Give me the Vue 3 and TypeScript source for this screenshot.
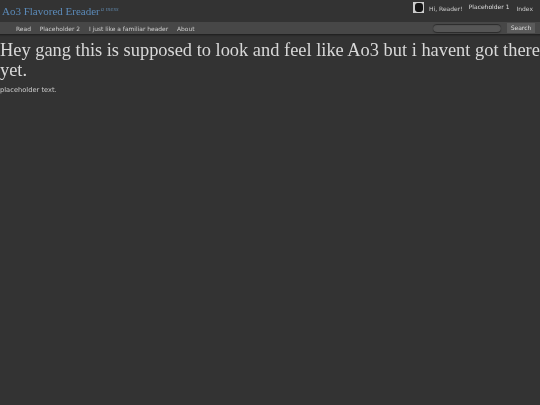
<script setup lang="ts">
const navLinks: string[] = ['Read', 'Placeholder 2', 'I just like a familiar header', 'About']
</script>

<template>
  <div class="page">
    <header class="header">
      <div class="top">
        <h1 class="brand">Ao3 Flavored Ereader<sup class="tag">a mess</sup></h1>
        <div class="user">
          <span class="avatar"><span class="blot"></span></span>
          <span class="greet">Hi, Reader!</span>
          <span class="ph">Placeholder 1</span>
          <span class="idx">Index</span>
        </div>
      </div>
      <nav class="nav">
        <div class="links">
          <a v-for="l in navLinks" :key="l" class="link">{{ l }}</a>
        </div>
        <div class="search">
          <span class="input"></span>
          <span class="btn">Search</span>
        </div>
      </nav>
    </header>
    <main>
      <h2 class="title">Hey gang this is supposed to look and feel like Ao3 but i havent got there yet.</h2>
      <p class="text">placeholder text.</p>
    </main>
  </div>
</template>

<style>
html, body { margin: 0; background: #333; }
</style>

<style scoped>
.page {
  width: 540px;
  height: 405px;
  overflow: hidden;
  background: #333;
  color: #ddd;
  font-family: "DejaVu Sans", sans-serif;
  font-size: 6px;
  filter: blur(0.35px);
}
.top {
  height: 22px;
  display: flex;
  justify-content: space-between;
}
.brand {
  margin: 0;
  padding: 5px 0 0 2px;
  font: 400 11px/13px "Liberation Serif", serif;
  color: #5b8ab8;
}
.tag {
  font-size: 6.6px;
  font-style: italic;
  color: #5b7f9f;
  vertical-align: 4px;
  line-height: 0;
  margin-left: 1px;
}
.user {
  display: flex;
  align-items: flex-start;
  padding: 2px 7px 0 0;
  color: #ccc;
}
.avatar {
  width: 11px;
  height: 11px;
  background: #ccc;
  display: flex;
  align-items: center;
  justify-content: center;
  margin-right: 5px;
}
.blot {
  width: 8px;
  height: 9px;
  border-radius: 35%;
  background: #141414;
}
.greet { margin: 3px 6px 0 0; }
.ph { margin: 1px 7px 0 0; color: #ddd; }
.idx { margin: 3px 0 0 0; }
.nav {
  height: 12px;
  display: flex;
  justify-content: space-between;
  background: #474747;
  border-bottom: 1px solid #222;
  box-shadow: 0 1px 1px #2b2b2b;
}
.links {
  display: flex;
  align-items: center;
  gap: 8.8px;
  padding-left: 16px;
  font-size: 5.95px;
  color: #ccc;
}
.search {
  display: flex;
  align-items: center;
  gap: 6px;
}
.input {
  width: 68px;
  height: 8px;
  border-radius: 4px;
  background: #555;
  box-shadow: inset 0 1px 1px #2a2a2a, 0 1px 1px #2a2a2a;
}
.btn {
  width: 28px;
  height: 10px;
  line-height: 10px;
  text-align: center;
  background: #5a5a5a;
  color: #ddd;
  margin-right: 5px;
}
.title {
  margin: 5px 0 0;
  font: 400 18.4px/20px "Liberation Serif", serif;
  color: #d8d8d8;
}
.text {
  margin: 6px 0 0;
  font-size: 6.7px;
  color: #ccc;
}
</style>
